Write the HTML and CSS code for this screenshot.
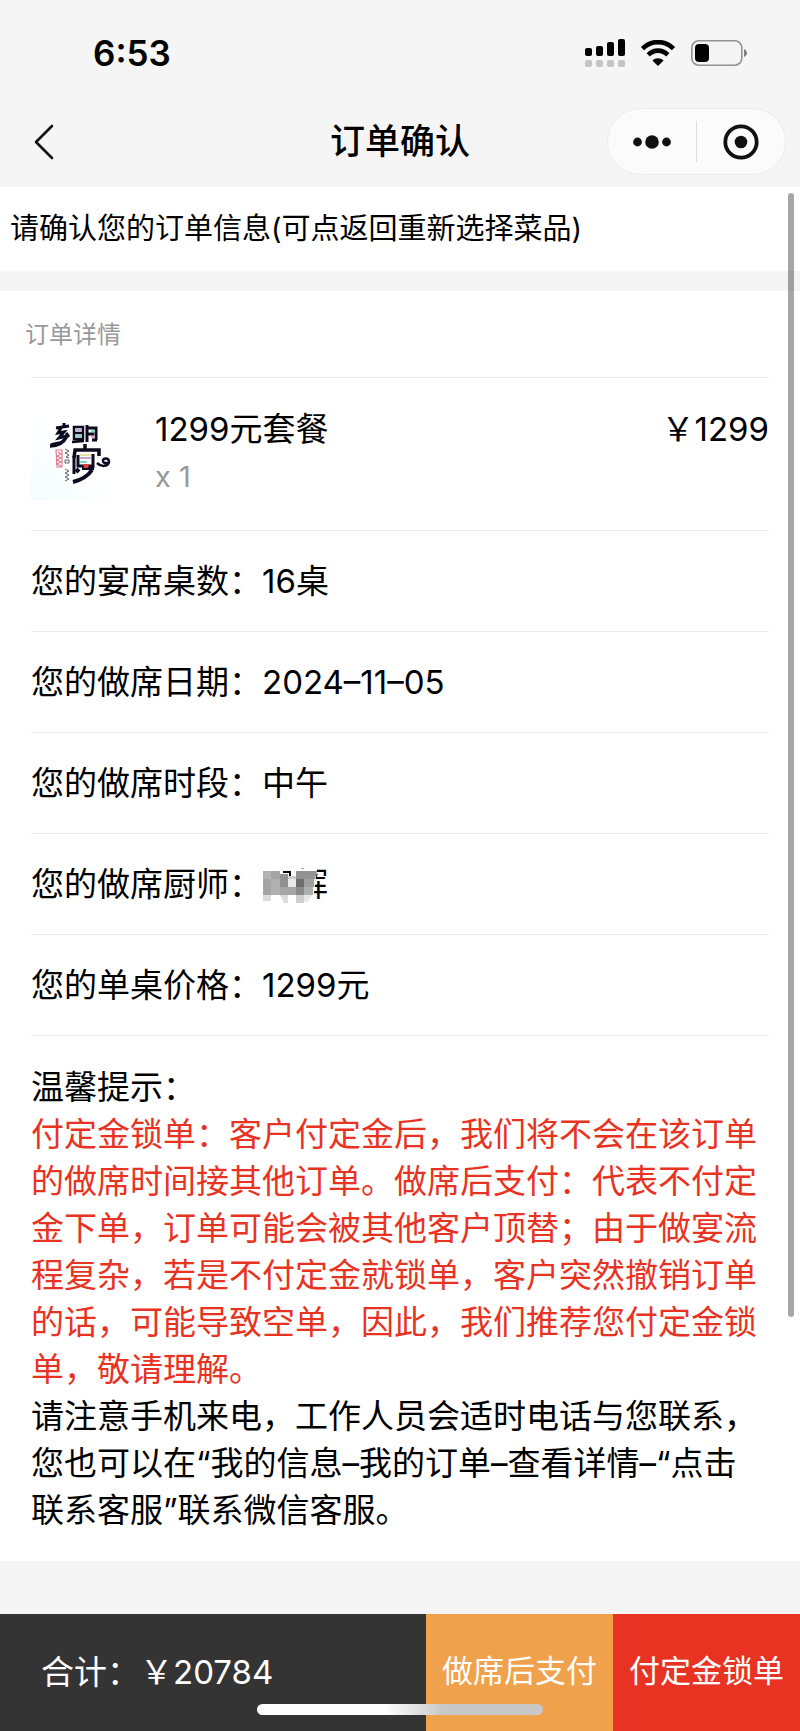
FILE: index.html
```html
<!DOCTYPE html>
<html lang="zh-CN">
<head>
    <meta charset="UTF-8">
    <meta name="viewport" content="width=device-width, initial-scale=1.0">
    <title>订单确认</title>
    <link rel="stylesheet" href="styles.css">
</head>
<body>
    <header class="header">
        <div class="status">
            <span class="time">6:53</span>
            <div class="status-icons">
                <svg width="40" height="29" viewBox="0 0 40 29">
                    <rect x="0" y="9" width="7" height="8" rx="2"/>
                    <rect x="11" y="7" width="7" height="10" rx="2"/>
                    <rect x="22" y="3" width="7" height="14" rx="2"/>
                    <rect x="33" y="0" width="7" height="17" rx="2"/>
                    <g fill="#c4c4c4">
                        <rect x="0" y="21" width="7" height="7" rx="2"/>
                        <rect x="11" y="21" width="7" height="7" rx="2"/>
                        <rect x="22" y="21" width="7" height="7" rx="2"/>
                        <rect x="33" y="21" width="7" height="7" rx="2"/>
                    </g>
                </svg>
                <svg width="36" height="26" viewBox="0 0 36 26">
                    <path d="M2.5 8.7C11-0.1 25-0.1 33.5 8.7" fill="none" stroke="#000" stroke-width="4.6"/>
                    <path d="M8.2 14.8c5.6-5.6 14-5.6 19.6 0" fill="none" stroke="#000" stroke-width="4.6"/>
                    <path d="M18 26l-5.6-5.6c3.2-2.9 8-2.9 11.2 0z"/>
                </svg>
                <svg width="56" height="26" viewBox="0 0 56 26">
                    <rect x="0.8" y="0.8" width="50" height="24.4" rx="7" fill="none" stroke="#929292" stroke-width="1.6"/>
                    <rect x="4" y="4" width="14" height="18" rx="4"/>
                    <path d="M53 9c4 1.5 4 6.5 0 8z" fill="#808080"/>
                </svg>
            </div>
        </div>
        <nav class="nav">
            <button class="back" aria-label="返回">
                <svg width="20" height="36" viewBox="0 0 20 36">
                    <path d="M18 2L2 18l16 16" fill="none" stroke="#111" stroke-width="2.6" stroke-linecap="round" stroke-linejoin="round"/>
                </svg>
            </button>
            <h1 class="title">订单确认</h1>
            <div class="capsule">
                <button class="capsule-btn" aria-label="更多">
                    <svg width="40" height="14" viewBox="0 0 40 14">
                        <circle cx="5.5" cy="7" r="4.4"/>
                        <circle cx="20" cy="7" r="6.8"/>
                        <circle cx="34.5" cy="7" r="4.4"/>
                    </svg>
                </button>
                <button class="capsule-btn" aria-label="关闭">
                    <svg width="36" height="36" viewBox="0 0 36 36">
                        <circle cx="18" cy="18" r="15.7" fill="none" stroke="#111" stroke-width="3.8"/>
                        <circle cx="18" cy="18" r="6.3"/>
                    </svg>
                </button>
            </div>
        </nav>
    </header>

    <main class="main">
        <p class="notice">请确认您的订单信息(可点返回重新选择菜品)</p>

        <section class="order">
            <h2 class="order-title">订单详情</h2>
            <div class="goods">
                <svg class="goods-img" viewBox="0 0 93 93">
                    <defs>
                        <linearGradient id="tint" x1="0" y1="1" x2="0.5" y2="0.5">
                            <stop offset="0" stop-color="#f2fdfd"/>
                            <stop offset="1" stop-color="#fff"/>
                        </linearGradient>
                    </defs>
                    <rect width="93" height="93" fill="url(#tint)"/>
                    <g fill="none" stroke="#0c0a1e" stroke-width="3">
                        <path d="M25 21l13-2M33 16v4M30 21l-3 5 6-1-5 6 8-2M35 26l3 4"/>
                        <path d="M19 39c8 0 14-4 17-10M20 38l9-2" stroke-width="3.5"/>
                        <path d="M43 20h9v12h-9zM43 26h9M41 35l12-1" stroke-width="2.5"/>
                        <path d="M56 18v17M57 21h8v12M57 27h6M61 33h5" stroke-width="3"/>
                        <path d="M54 37v5M43 51l1-8h24v6" stroke-width="3.5"/>
                        <path d="M43 49v18M47 48v11h16M62 47v14" stroke-width="3"/>
                        <path d="M48 62l-3 3M51 61h12M42 75c8-2 15-6 19-12" stroke-width="4"/>
                        <path d="M66 56c4 4 11 4 12-1 0-5-7-4-6-1 0 2 3 3 4 1" stroke-width="2.5"/>
                    </g>
                    <g fill="none" stroke-width="2">
                        <path d="M45 23h6M49 51h11" stroke="#c6a6dc"/>
                        <path d="M45 29h6M60 24h4M49 55h7" stroke="#80d8cb"/>
                        <path d="M60 30h4" stroke="#ec9cbc"/>
                        <path d="M49 48h11" stroke="#e8e1a0"/>
                    </g>
                    <path d="M52 57h6l-1 4h-4z" fill="#e43d40"/>
                    <path d="M25 43h6v17h-5zM27 45l3 2-4 2 4 2-4 2 4 2-4 2 4 2" fill="none" stroke="#dc7c90" stroke-width="1.2"/>
                    <path d="M34 42l4 2-4 2 4 2-3 2 3 1M34 53h4v3h-4zM34 62l4 2-4 2 4 2-4 2 4 2-4 2" fill="none" stroke="#3d3d48" stroke-width="0.8"/>
                </svg>
                <div class="goods-info">
                    <p class="goods-name">1299元套餐</p>
                    <p class="goods-count">x 1</p>
                </div>
                <p class="goods-price">￥1299</p>
            </div>
            <p class="row">您的宴席桌数：16桌</p>
            <p class="row">您的做席日期：2024–11–05</p>
            <p class="row">您的做席时段：中午</p>
            <p class="row">您的做席厨师：<span class="chef">辉<svg class="mosaic" width="56" height="42" viewBox="0 0 56 42">
                <path d="M0 6h54l-3 24-5 9H20L0 37z" fill="#fff"/>
                <path d="M0 8h8v8H0z" fill="#b4b4b4"/>
                <path d="M8 8h9v8H8z" fill="#a4a4a4"/>
                <path d="M17 11h8v5h-8z" fill="#949494"/>
                <path d="M20 9h7v4M33 9h2" fill="none" stroke="#000" stroke-width="2"/>
                <path d="M25 13h8v3h-8z" fill="#cecece"/>
                <path d="M33 8h21l-2 8H33z" fill="#929292"/>
                <path d="M0 16h8v16H0z" fill="#a5a5a5"/>
                <path d="M8 16h9v16H8z" fill="#b0b0b0"/>
                <path d="M17 16h8v8h-8z" fill="#919191"/>
                <path d="M25 16h8v8h-8z" fill="#e8e8e8"/>
                <path d="M33 16h8v8h-8z" fill="#6e6e6e"/>
                <path d="M41 16h10v8H41z" fill="#a0a0a0"/>
                <path d="M17 24h16v8H17z" fill="#a6a6a6"/>
                <path d="M33 24h8v8h-8z" fill="#8a8a8a"/>
                <path d="M41 24h9v8h-9z" fill="#b0b0b0"/>
                <path d="M0 32h8v6H0zM17 32h8v8h-4z" fill="#dcdcdc"/>
                <path d="M33 32h8v8h-8z" fill="#cecece"/>
                <path d="M41 32h8l-4 7h-4z" fill="#e8e8e8"/>
            </svg></span></p>
            <p class="row">您的单桌价格：1299元</p>
            <div class="tips">
                <p>温馨提示：</p>
                <p class="warn">付定金锁单：客户付定金后，我们将不会在该订单的做席时间接其他订单。做席后支付：代表不付定金下单，订单可能会被其他客户顶替；由于做宴流程复杂，若是不付定金就锁单，客户突然撤销订单的话，可能导致空单，因此，我们推荐您付定金锁单，敬请理解。</p>
                <p>请注意手机来电，工作人员会适时电话与您联系，您也可以在“我的信息–我的订单–查看详情–“点击联系客服”联系微信客服。</p>
            </div>
        </section>
        <div class="scrollbar"></div>
    </main>

    <footer class="footer">
        <p class="total">合计：￥20784</p>
        <button class="pay pay-later">做席后支付</button>
        <button class="pay pay-now">付定金锁单</button>
        <div class="home-bar"></div>
    </footer>
</body>
</html>
```
FILE: styles.css
```css
* {
    box-sizing: border-box;
}
body {
    margin: 0;
    min-height: 100vh;
    display: flex;
    flex-direction: column;
    background-color: #f5f5f5;
    color: #000;
    font-family: Inter, "Noto Sans CJK SC", sans-serif;
    font-size: 33px;
    font-weight: 400;
    line-height: 47px;
}
h1, h2, p {
    margin: 0;
}
button {
    padding: 0;
    border: none;
    background: none;
    font: inherit;
    color: inherit;
}
svg {
    display: block;
}

/* Header */
.status {
    height: 96px;
    padding: 10px 53px 0 93px;
    display: flex;
    align-items: center;
    justify-content: space-between;
}
.time {
    font-size: 35px;
    font-weight: 600;
}
.status-icons {
    display: flex;
    align-items: center;
    gap: 15px;
}
.nav {
    height: 91px;
    padding: 0 14px;
    display: grid;
    grid-template-columns: 1fr auto 1fr;
    align-items: center;
}
.back {
    justify-self: start;
    margin-left: 20px;
}
.title {
    font-size: 35px;
    font-weight: 500;
}
.capsule {
    justify-self: end;
    width: 179px;
    height: 67px;
    display: flex;
    align-items: center;
    border: 1px solid #ececec;
    border-radius: 34px;
    background-color: #fbfbfb;
}
.capsule-btn {
    flex: 1;
    height: 41px;
    display: flex;
    align-items: center;
    justify-content: center;
    fill: #111;
}
.capsule-btn + .capsule-btn {
    border-left: 1px solid #dcdcdc;
}

/* Order */
.main {
    position: relative;
}
.notice {
    padding: 18px 10px 19px;
    background-color: #fff;
    font-size: 29px;
}
.order {
    margin-top: 20px;
    padding: 0 31px;
    background-color: #fff;
}
.order-title {
    margin-left: -6px;
    padding: 20px 0 19px;
    font-size: 24px;
    font-weight: 400;
    color: #999;
}
.goods {
    display: flex;
    padding: 29px 0 30px;
    border-top: 1px solid #ebebeb;
}
.goods-img {
    width: 93px;
    height: 93px;
}
.goods-info {
    flex: 1;
    padding-left: 31px;
}
.goods-name {
    padding-bottom: 2px;
    line-height: 44px;
}
.goods-count {
    font-size: 29px;
    color: #999;
}
.goods-price {
    line-height: 44px;
}
.row {
    padding: 27px 0;
    border-top: 1px solid #ebebeb;
    line-height: 46px;
}
.chef {
    position: relative;
    padding-left: 33px;
}
.mosaic {
    position: absolute;
    left: 1px;
    top: -1px;
}
.tips {
    padding: 28px 10px 27px 0;
    border-top: 1px solid #ebebeb;
}
.warn {
    color: #e83323;
}
.scrollbar {
    position: absolute;
    top: 6px;
    right: 6px;
    width: 6px;
    height: 1124px;
    border-radius: 3px;
    background-color: rgb(0, 0, 0, 0.35);
}

/* Footer */
.footer {
    position: relative;
    display: flex;
    height: 117px;
    margin-top: auto;
    background-color: #343434;
    color: #fff;
}
.total {
    flex: 1;
    padding: 35px 0 0 41px;
}
.pay {
    width: 187px;
    padding-bottom: 4px;
    font-size: 31px;
    text-align: center;
}
.pay-later {
    background-color: #f0a14c;
}
.pay-now {
    background-color: #e83323;
}
.home-bar {
    position: absolute;
    left: 50%;
    bottom: 16px;
    width: 286px;
    height: 11px;
    margin-left: -143px;
    border-radius: 6px;
    background: linear-gradient(90deg, #fff 45%, #c8c8c8 65%);
}
```
